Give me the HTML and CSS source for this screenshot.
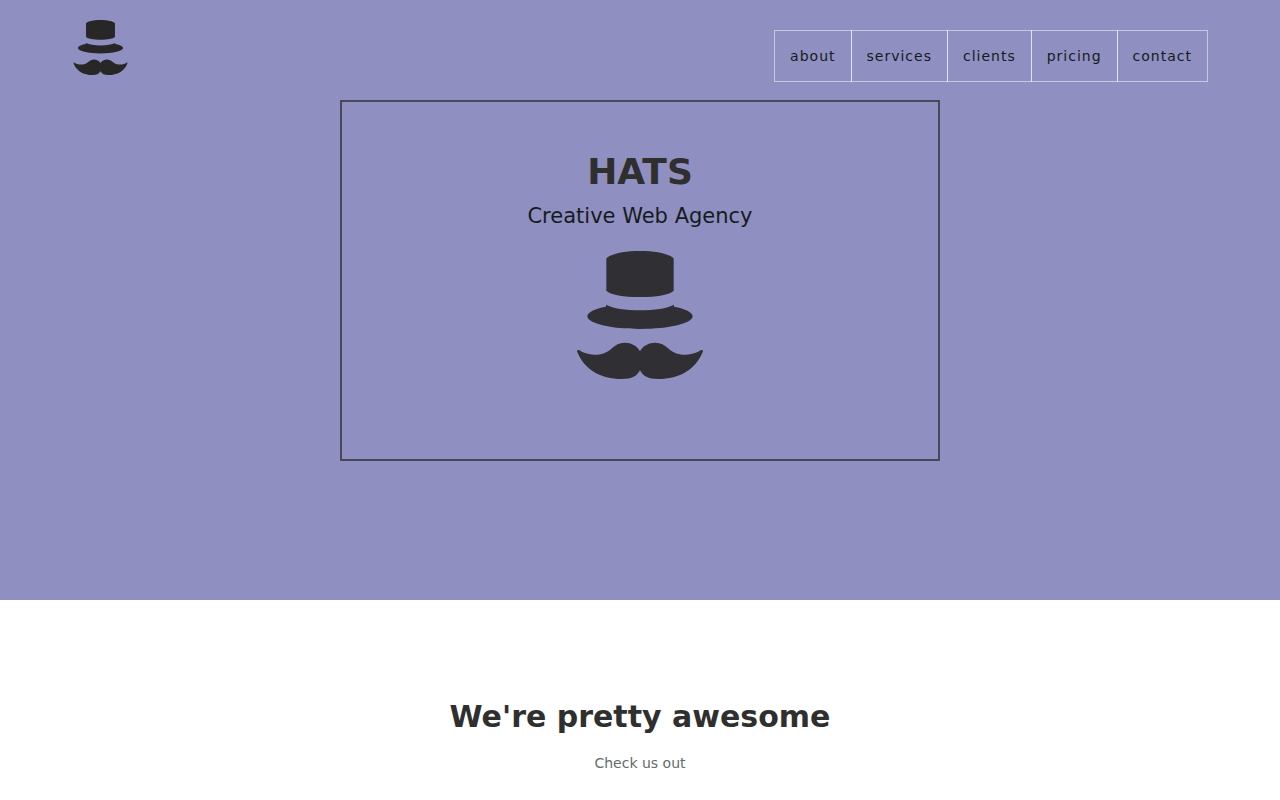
FILE: index.html
```html
<!DOCTYPE html>
<html lang="en">
<head>
<meta charset="utf-8">
<meta name="viewport" content="width=device-width, initial-scale=1">
<title>HATS - Creative Web Agency</title>
<link rel="stylesheet" href="styles.css">
</head>
<body>
<svg class="sprite" aria-hidden="true">
  <symbol id="hat" viewBox="51 33 378 384">
    <path d="M139 56C150 42 190 33 240 33S330 42 341 56V152C329 164 290 171 240 171S151 164 139 152Z"/>
    <path d="M138 194C160 205 196 211 240 211S320 205 342 194V200C376 206 398 217 398 229C398 250 328 267 240 267S82 250 82 229C82 217 104 206 138 200Z"/>
    <path d="M240 333C230 317 214 308 194 308C178 308 167 314 154 326C140 339 123 344 103 344C84 344 69 338 58 331C53 329 50 331 52 336C74 389 120 417 186 417C213 417 229 411 240 391C251 411 267 417 294 417C360 417 406 389 428 336C430 331 427 329 422 331C411 338 396 344 377 344C357 344 340 339 326 326C313 314 302 308 286 308C266 308 250 317 240 333Z"/>
  </symbol>
</svg>
<div class="hero">
  <header class="topbar">
    <a class="logo" href="#" aria-label="HATS home"><svg class="logo-icon" aria-hidden="true"><use href="#hat"/></svg></a>
    <nav class="nav" aria-label="Main">
      <a class="nav-link" href="#about">about</a>
      <a class="nav-link" href="#services">services</a>
      <a class="nav-link" href="#clients">clients</a>
      <a class="nav-link" href="#pricing">pricing</a>
      <a class="nav-link" href="#contact">contact</a>
    </nav>
  </header>
  <section class="banner">
    <h1 class="banner-title">HATS</h1>
    <p class="banner-text">Creative Web Agency</p>
    <svg class="banner-icon" aria-hidden="true"><use href="#hat"/></svg>
  </section>
</div>
<main class="about" id="about">
  <h2 class="about-title">We're pretty awesome</h2>
  <p class="about-text">Check us out</p>
</main>
</body>
</html>
```
FILE: styles.css
```css
* {
  box-sizing: border-box;
}

body {
  margin: 0;
  font-family: "DejaVu Sans", sans-serif;
  font-size: 14px;
  line-height: 20px;
  color: #636c6c;
  background: #fff;
}

h1,
h2,
p {
  margin: 0;
}

.sprite {
  display: none;
}

.hero {
  padding-bottom: 139px;
  background: #908fc1;
}

.topbar {
  display: flex;
  justify-content: space-between;
  align-items: flex-start;
  min-height: 100px;
  padding: 20px 72px 0;
}

.logo-icon {
  display: block;
  width: 57px;
  height: 55px;
  fill: #272727;
}

.nav {
  display: flex;
  margin-top: 10px;
}

.nav-link {
  padding: 15px;
  border: 1px solid rgba(255, 255, 255, 0.5);
  letter-spacing: 1px;
  color: #151c20;
  text-decoration: none;
}

.nav-link + .nav-link {
  margin-left: -1px;
}

.banner {
  display: flex;
  flex-direction: column;
  align-items: center;
  max-width: 600px;
  margin: 0 auto;
  padding: 48px 20px 80px;
  border: 2px solid #484859;
  text-align: center;
}

.banner-title {
  font-size: 36px;
  line-height: 44px;
  color: #2f2f2f;
}

.banner-text {
  margin-top: 7px;
  font-size: 21px;
  line-height: 30px;
  color: #151c20;
}

.banner-icon {
  width: 126px;
  height: 128px;
  margin-top: 20px;
  fill: #302f34;
}

.about {
  padding: 99px 20px 80px;
  text-align: center;
}

.about-title {
  font-size: 30px;
  line-height: 36px;
  color: #2f2f2f;
}

.about-text {
  margin-top: 18px;
}
```
